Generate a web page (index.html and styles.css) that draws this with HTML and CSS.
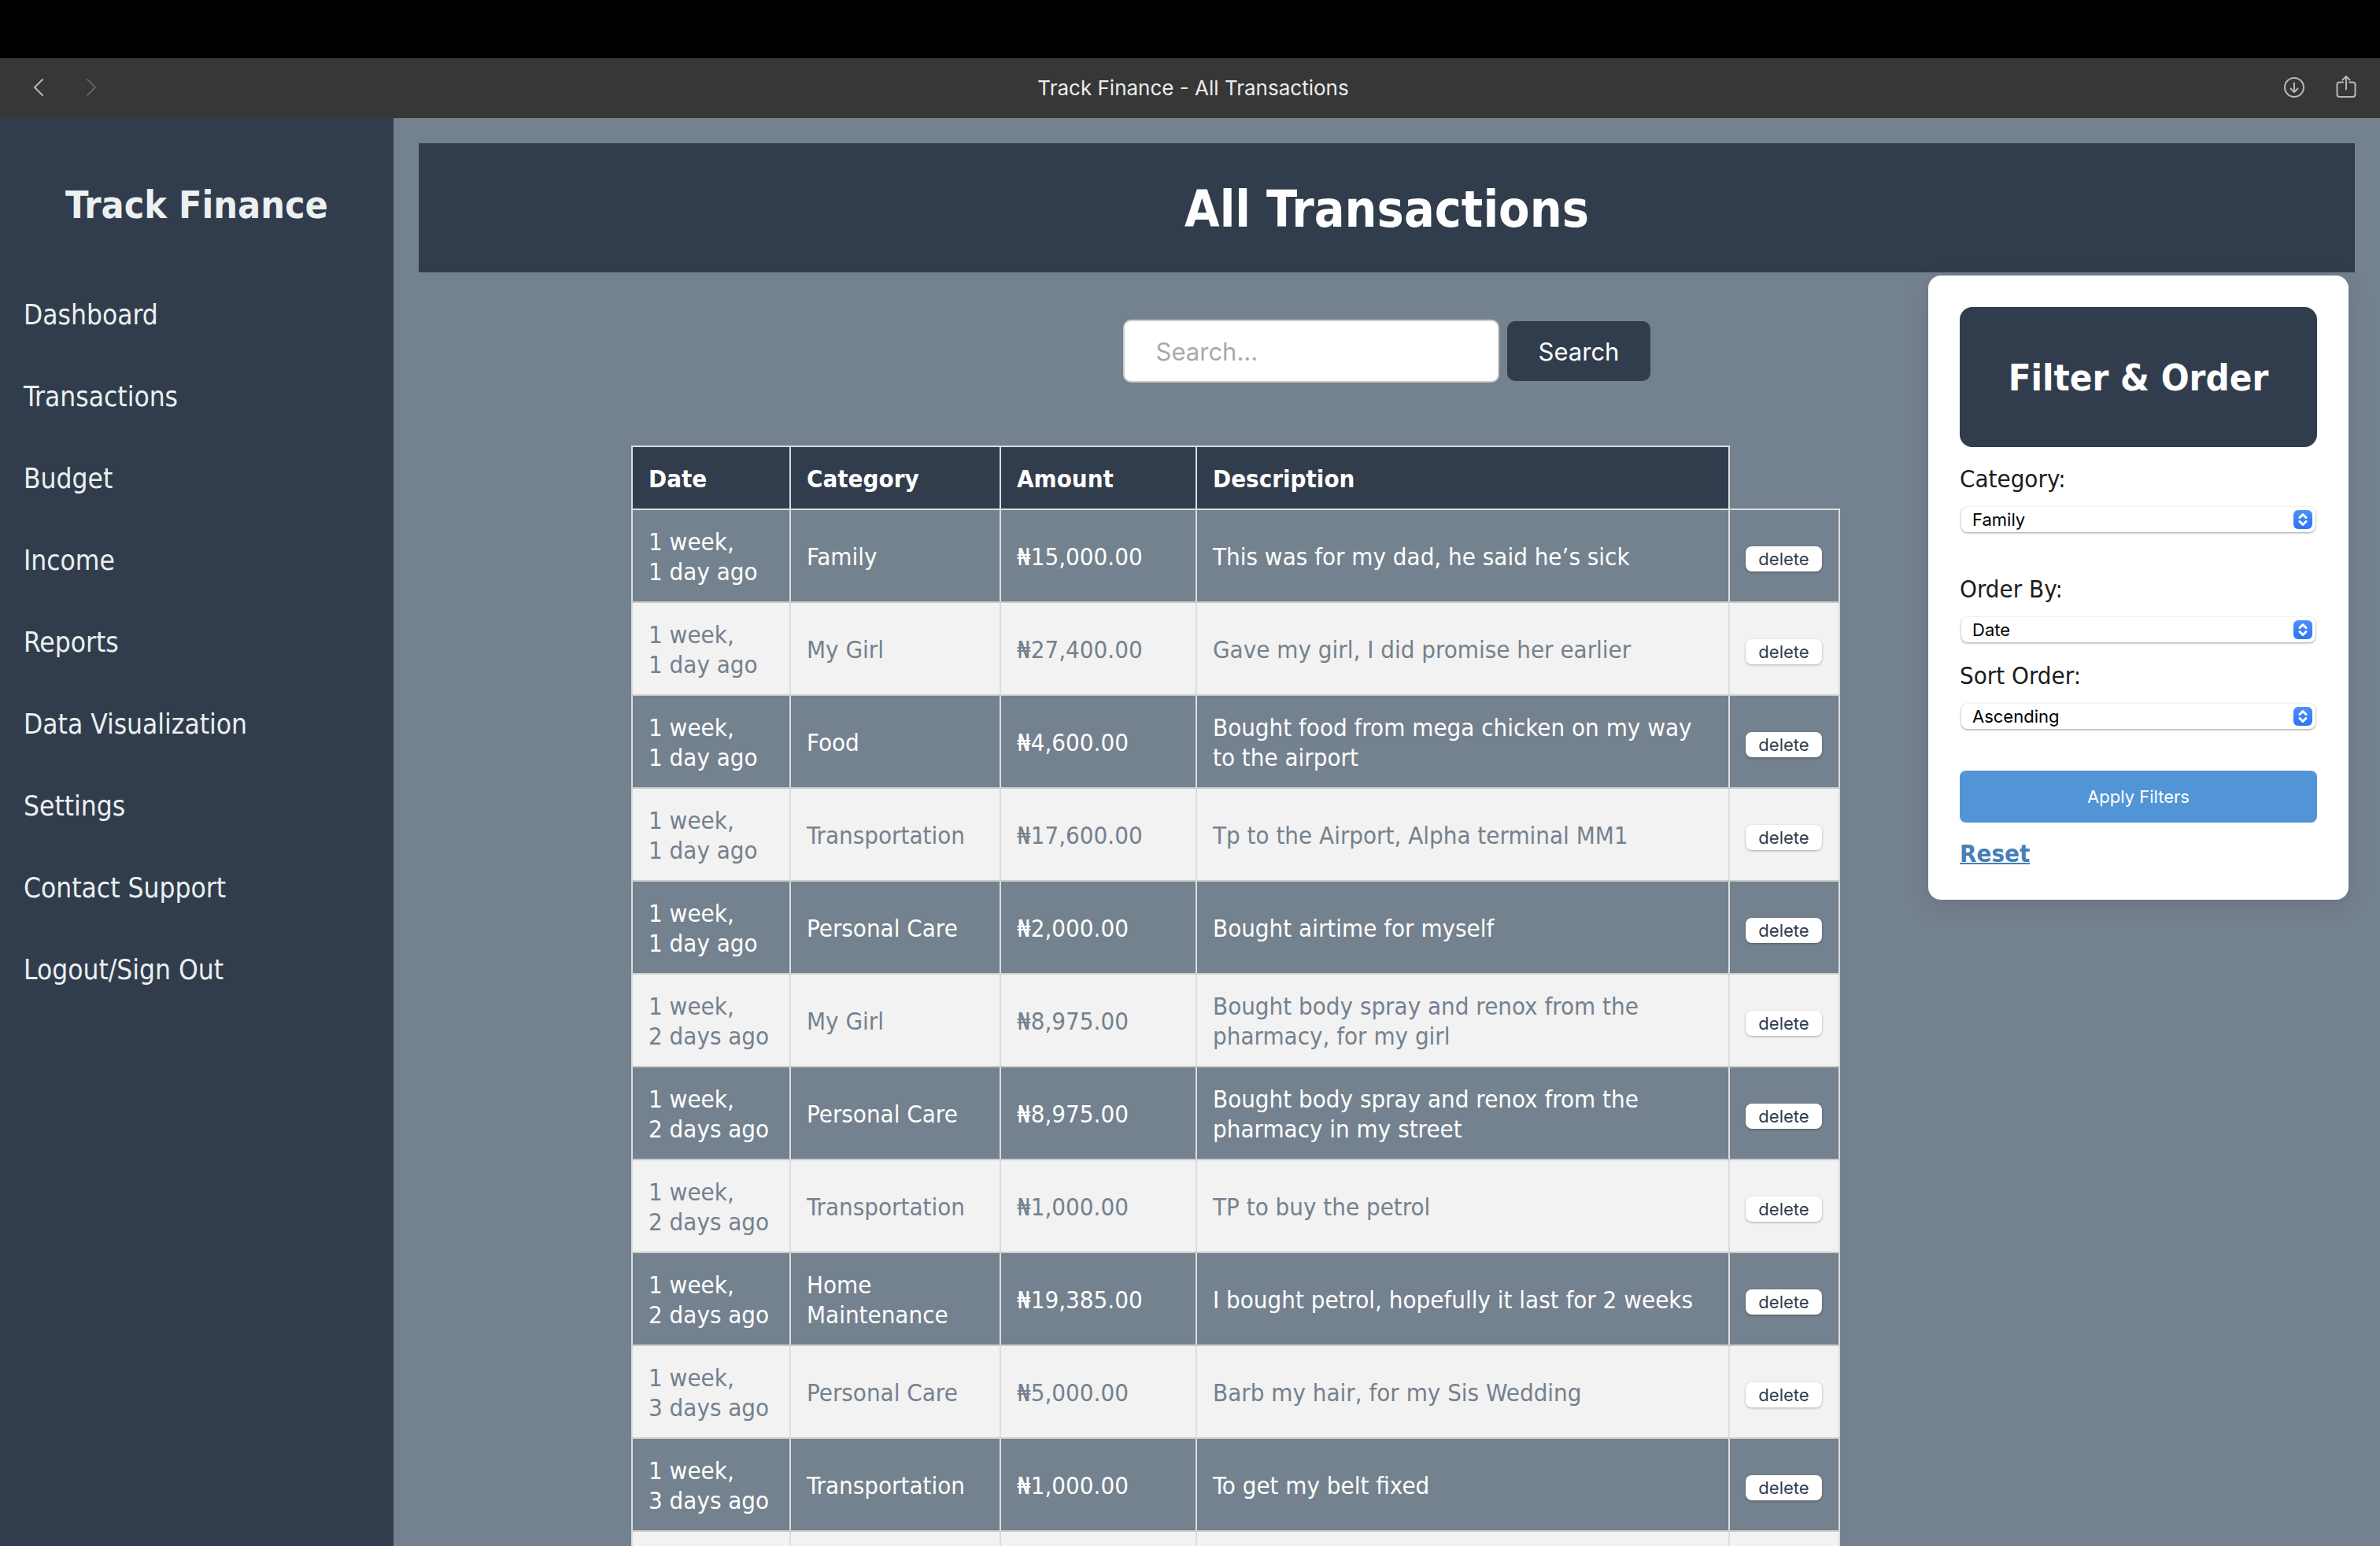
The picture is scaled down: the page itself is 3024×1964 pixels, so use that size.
FILE: index.html
```html
<!DOCTYPE html>
<html lang="en">
<head>
<meta charset="utf-8">
<meta name="viewport" content="width=device-width, initial-scale=1">
<title>Track Finance - All Transactions</title>
<link rel="stylesheet" href="styles.css">
</head>
<body>
<header class="toolbar">
  <div class="toolbar-group">
    <button class="icon-button" type="button" aria-label="Back"><svg width="26" height="32" viewBox="0 0 26 32"><path d="M19 5 9 15 19 25" /></svg></button>
    <button class="icon-button faded" type="button" aria-label="Forward" disabled><svg width="26" height="32" viewBox="0 0 26 32"><path d="M8 5 18 15 8 25" /></svg></button>
  </div>
  <p class="toolbar-title">Track Finance - All Transactions</p>
  <div class="toolbar-group end">
    <button class="icon-button" type="button" aria-label="Downloads"><svg width="32" height="32" viewBox="0 0 32 32"><circle cx="16" cy="15" r="12" /><path d="M16 9.500V20.500M11.500 16.500l4.500 4.500 4.500-4.500" /></svg></button>
    <button class="icon-button" type="button" aria-label="Share"><svg width="32" height="32" viewBox="0 0 32 32"><path d="M12 8.500H7.500a3 3 0 0 0-3 3V24a3 3 0 0 0 3 3h17a3 3 0 0 0 3-3V11.500a3 3 0 0 0-3-3H20M16 17.500V1M11.500 5.500 16 1l4.500 4.500" /></svg></button>
  </div>
</header>
<div class="app">
  <aside class="sidebar">
    <h2 class="brand">Track Finance</h2>
    <nav class="nav">
      <a href="#">Dashboard</a>
      <a href="#">Transactions</a>
      <a href="#">Budget</a>
      <a href="#">Income</a>
      <a href="#">Reports</a>
      <a href="#">Data Visualization</a>
      <a href="#">Settings</a>
      <a href="#">Contact Support</a>
      <a href="#">Logout/Sign Out</a>
    </nav>
  </aside>
  <main class="main">
    <h1 class="page-title">All Transactions</h1>
    <div class="content">
      <form class="search">
        <input class="search-input" type="search" placeholder="Search..." aria-label="Search transactions">
        <button class="search-button" type="button">Search</button>
      </form>
      <table class="transactions">
        <colgroup><col class="col-date"><col class="col-category"><col class="col-amount"><col class="col-description"><col></colgroup>
        <thead>
          <tr><th>Date</th><th>Category</th><th>Amount</th><th>Description</th></tr>
        </thead>
        <tbody>
          <tr><td>1&nbsp;week, 1&nbsp;day ago</td><td>Family</td><td>₦15,000.00</td><td>This was for my dad, he said he’s sick</td><td><button class="delete" type="button">delete</button></td></tr>
          <tr><td>1&nbsp;week, 1&nbsp;day ago</td><td>My Girl</td><td>₦27,400.00</td><td>Gave my girl, I did promise her earlier</td><td><button class="delete" type="button">delete</button></td></tr>
          <tr><td>1&nbsp;week, 1&nbsp;day ago</td><td>Food</td><td>₦4,600.00</td><td>Bought food from mega chicken on my way to the airport</td><td><button class="delete" type="button">delete</button></td></tr>
          <tr><td>1&nbsp;week, 1&nbsp;day ago</td><td>Transportation</td><td>₦17,600.00</td><td>Tp to the Airport, Alpha terminal MM1</td><td><button class="delete" type="button">delete</button></td></tr>
          <tr><td>1&nbsp;week, 1&nbsp;day ago</td><td>Personal Care</td><td>₦2,000.00</td><td>Bought airtime for myself</td><td><button class="delete" type="button">delete</button></td></tr>
          <tr><td>1&nbsp;week, 2&nbsp;days ago</td><td>My Girl</td><td>₦8,975.00</td><td>Bought body spray and renox from the pharmacy, for my girl</td><td><button class="delete" type="button">delete</button></td></tr>
          <tr><td>1&nbsp;week, 2&nbsp;days ago</td><td>Personal Care</td><td>₦8,975.00</td><td>Bought body spray and renox from the pharmacy in my street</td><td><button class="delete" type="button">delete</button></td></tr>
          <tr><td>1&nbsp;week, 2&nbsp;days ago</td><td>Transportation</td><td>₦1,000.00</td><td>TP to buy the petrol</td><td><button class="delete" type="button">delete</button></td></tr>
          <tr><td>1&nbsp;week, 2&nbsp;days ago</td><td>Home Maintenance</td><td>₦19,385.00</td><td>I bought petrol, hopefully it last for 2 weeks</td><td><button class="delete" type="button">delete</button></td></tr>
          <tr><td>1&nbsp;week, 3&nbsp;days ago</td><td>Personal Care</td><td>₦5,000.00</td><td>Barb my hair, for my Sis Wedding</td><td><button class="delete" type="button">delete</button></td></tr>
          <tr><td>1&nbsp;week, 3&nbsp;days ago</td><td>Transportation</td><td>₦1,000.00</td><td>To get my belt fixed</td><td><button class="delete" type="button">delete</button></td></tr>
          <tr><td></td><td></td><td></td><td></td><td></td></tr>
        </tbody>
      </table>
      <form class="filters">
        <h2 class="filters-title">Filter &amp; Order</h2>
        <div class="field spaced">
          <label for="category">Category:</label>
          <div class="select">
            <select id="category"><option>Family</option></select>
            <svg class="stepper" width="24" height="24" viewBox="0 0 24 24"><path d="M8 9.500 12 5.500l4 4M8 14.500l4 4 4-4" /></svg>
          </div>
        </div>
        <div class="field">
          <label for="order">Order By:</label>
          <div class="select">
            <select id="order"><option>Date</option></select>
            <svg class="stepper" width="24" height="24" viewBox="0 0 24 24"><path d="M8 9.500 12 5.500l4 4M8 14.500l4 4 4-4" /></svg>
          </div>
        </div>
        <div class="field spaced">
          <label for="sort">Sort Order:</label>
          <div class="select">
            <select id="sort"><option>Ascending</option></select>
            <svg class="stepper" width="24" height="24" viewBox="0 0 24 24"><path d="M8 9.500 12 5.500l4 4M8 14.500l4 4 4-4" /></svg>
          </div>
        </div>
        <button class="apply" type="button">Apply Filters</button>
        <a class="reset" href="#">Reset</a>
      </form>
    </div>
  </main>
</div>
</body>
</html>
```

FILE: styles.css
```css
:root {
  --navy: #313d4d;
  --slate: #74818e;
  --light: #ecf0f1;
  --text-font: Tahoma, "DejaVu Sans Condensed", "Noto Sans", sans-serif;
  --ui-font: Inter, "Liberation Sans", sans-serif;
}

* {
  box-sizing: border-box;
}

body {
  display: flex;
  flex-direction: column;
  height: 100vh;
  margin: 0;
  overflow: hidden;
  background: var(--slate);
  font-family: var(--text-font);
  font-size: 31px;
  line-height: 38px;
}

button,
input,
select {
  margin: 0;
  border: 0;
  font-family: var(--ui-font);
}

/* Window toolbar */
.toolbar {
  display: grid;
  grid-template-columns: 1fr auto 1fr;
  align-items: center;
  flex: none;
  height: 150px;
  padding: 0 27px 0 35px;
  border-top: 74px solid #000;
  background: #373737;
}

.toolbar-title {
  margin: 0;
  color: #ececec;
  font-family: var(--ui-font);
  font-size: 26px;
}

.toolbar-group {
  display: flex;
  gap: 42px;
}

.toolbar-group.end {
  justify-content: flex-end;
  gap: 34px;
}

.icon-button {
  display: flex;
  padding: 0;
  background: none;
  color: #b8b8b8;
}

.icon-button.faded {
  color: #626262;
}

.icon-button svg {
  fill: none;
  stroke: currentColor;
  stroke-width: 2;
  stroke-linecap: round;
  stroke-linejoin: round;
}

/* Page frame */
.app {
  display: flex;
  flex: 1;
  min-height: 0;
}

.sidebar {
  flex: none;
  width: 500px;
  padding-top: 80px;
  background: var(--navy);
  color: var(--light);
}

.brand {
  margin: 0 0 58px;
  font-size: 48px;
  line-height: 60px;
  text-align: center;
}

.nav {
  display: flex;
  flex-direction: column;
}

.nav a {
  padding: 30px;
  color: var(--light);
  font-size: 35px;
  line-height: 44px;
  text-decoration: none;
}

.main {
  flex: 1;
  min-width: 0;
  padding: 32px;
}

.page-title {
  margin: 0;
  padding: 44px 42px 40px;
  background: var(--navy);
  color: #fff;
  font-size: 64px;
  line-height: 80px;
  text-align: center;
}

.content {
  display: grid;
  grid-template-columns: 1fr 534px;
  grid-template-rows: 220px auto;
  padding-right: 8px;
}

/* Search */
.search {
  display: flex;
  grid-row: 1;
  grid-column: 1 / 3;
  align-items: center;
  justify-content: center;
  gap: 10px;
  height: 80px;
  margin: 60px 0 0 8px;
}

.search-input {
  width: 478px;
  height: 80px;
  padding: 0 40px;
  border: 2px solid #ccc;
  border-radius: 10px;
  background: #fff;
  font-size: 31px;
  appearance: none;
}

.search-input::placeholder {
  color: #a9a9a9;
}

.search-button {
  height: 76px;
  padding: 0 40px;
  border-radius: 10px;
  background: var(--navy);
  color: #fff;
  font-size: 31px;
}

/* Transactions */
.transactions {
  grid-row: 2;
  grid-column: 1;
  justify-self: end;
  width: 100%;
  max-width: 1536px;
  margin-right: 112px;
  border-collapse: collapse;
  table-layout: fixed;
  color: #fff;
}

.col-date {
  width: 201px;
}

.col-category {
  width: 267px;
}

.col-amount {
  width: 249px;
}

.col-description {
  width: 677px;
}

.transactions th,
.transactions td {
  padding: 21px 20px 19px;
  border: 2px solid #ddd;
  text-align: left;
}

.transactions th {
  background: var(--navy);
}

.transactions td {
  height: 118px;
  border-bottom-color: #ccc;
}

.transactions tbody tr:nth-child(even) {
  background: #f2f2f2;
  color: var(--slate);
}

.delete {
  width: 97px;
  height: 32px;
  padding: 0;
  border-radius: 8px;
  background: #fff;
  box-shadow: 0 1px 3px rgba(0, 0, 0, 0.3);
  color: var(--navy);
  font-size: 22px;
  line-height: 32px;
}

/* Filters */
.filters {
  display: flex;
  grid-row: 1 / 3;
  grid-column: 2;
  align-self: start;
  flex-direction: column;
  margin-top: 4px;
  padding: 40px;
  border-radius: 16px;
  background: #fff;
  box-shadow: 0 8px 32px rgba(0, 0, 0, 0.1);
  color: #1c1c1c;
}

.filters-title {
  margin: 0 0 21px;
  padding: 61px 0 59px;
  border-radius: 16px;
  background: var(--navy);
  color: #fff;
  font-size: 47px;
  line-height: 58px;
  text-align: center;
}

.field {
  display: flex;
  flex-direction: column;
  gap: 17px;
  margin-bottom: 23px;
}

.field.spaced {
  margin-bottom: 53px;
}

.select {
  position: relative;
  display: flex;
  margin: 0 2px;
}

.select select {
  width: 100%;
  height: 32px;
  padding: 0 36px 0 14px;
  border-radius: 8px;
  background: #fff;
  box-shadow: 0 1px 3px rgba(0, 0, 0, 0.4);
  color: #000;
  font-size: 22px;
  appearance: none;
}

.stepper {
  position: absolute;
  top: 4px;
  right: 4px;
  border-radius: 6px;
  background: linear-gradient(#4b91f7, #2f74f5);
  fill: none;
  stroke: #fff;
  stroke-width: 3;
  stroke-linecap: round;
  stroke-linejoin: round;
  pointer-events: none;
}

.apply {
  height: 66px;
  margin-bottom: 20px;
  border-radius: 8px;
  background: #5295d6;
  color: #fff;
  font-size: 22px;
}

.reset {
  align-self: flex-start;
  color: #4680b4;
  font-weight: bold;
  text-decoration-thickness: 2px;
}
```
